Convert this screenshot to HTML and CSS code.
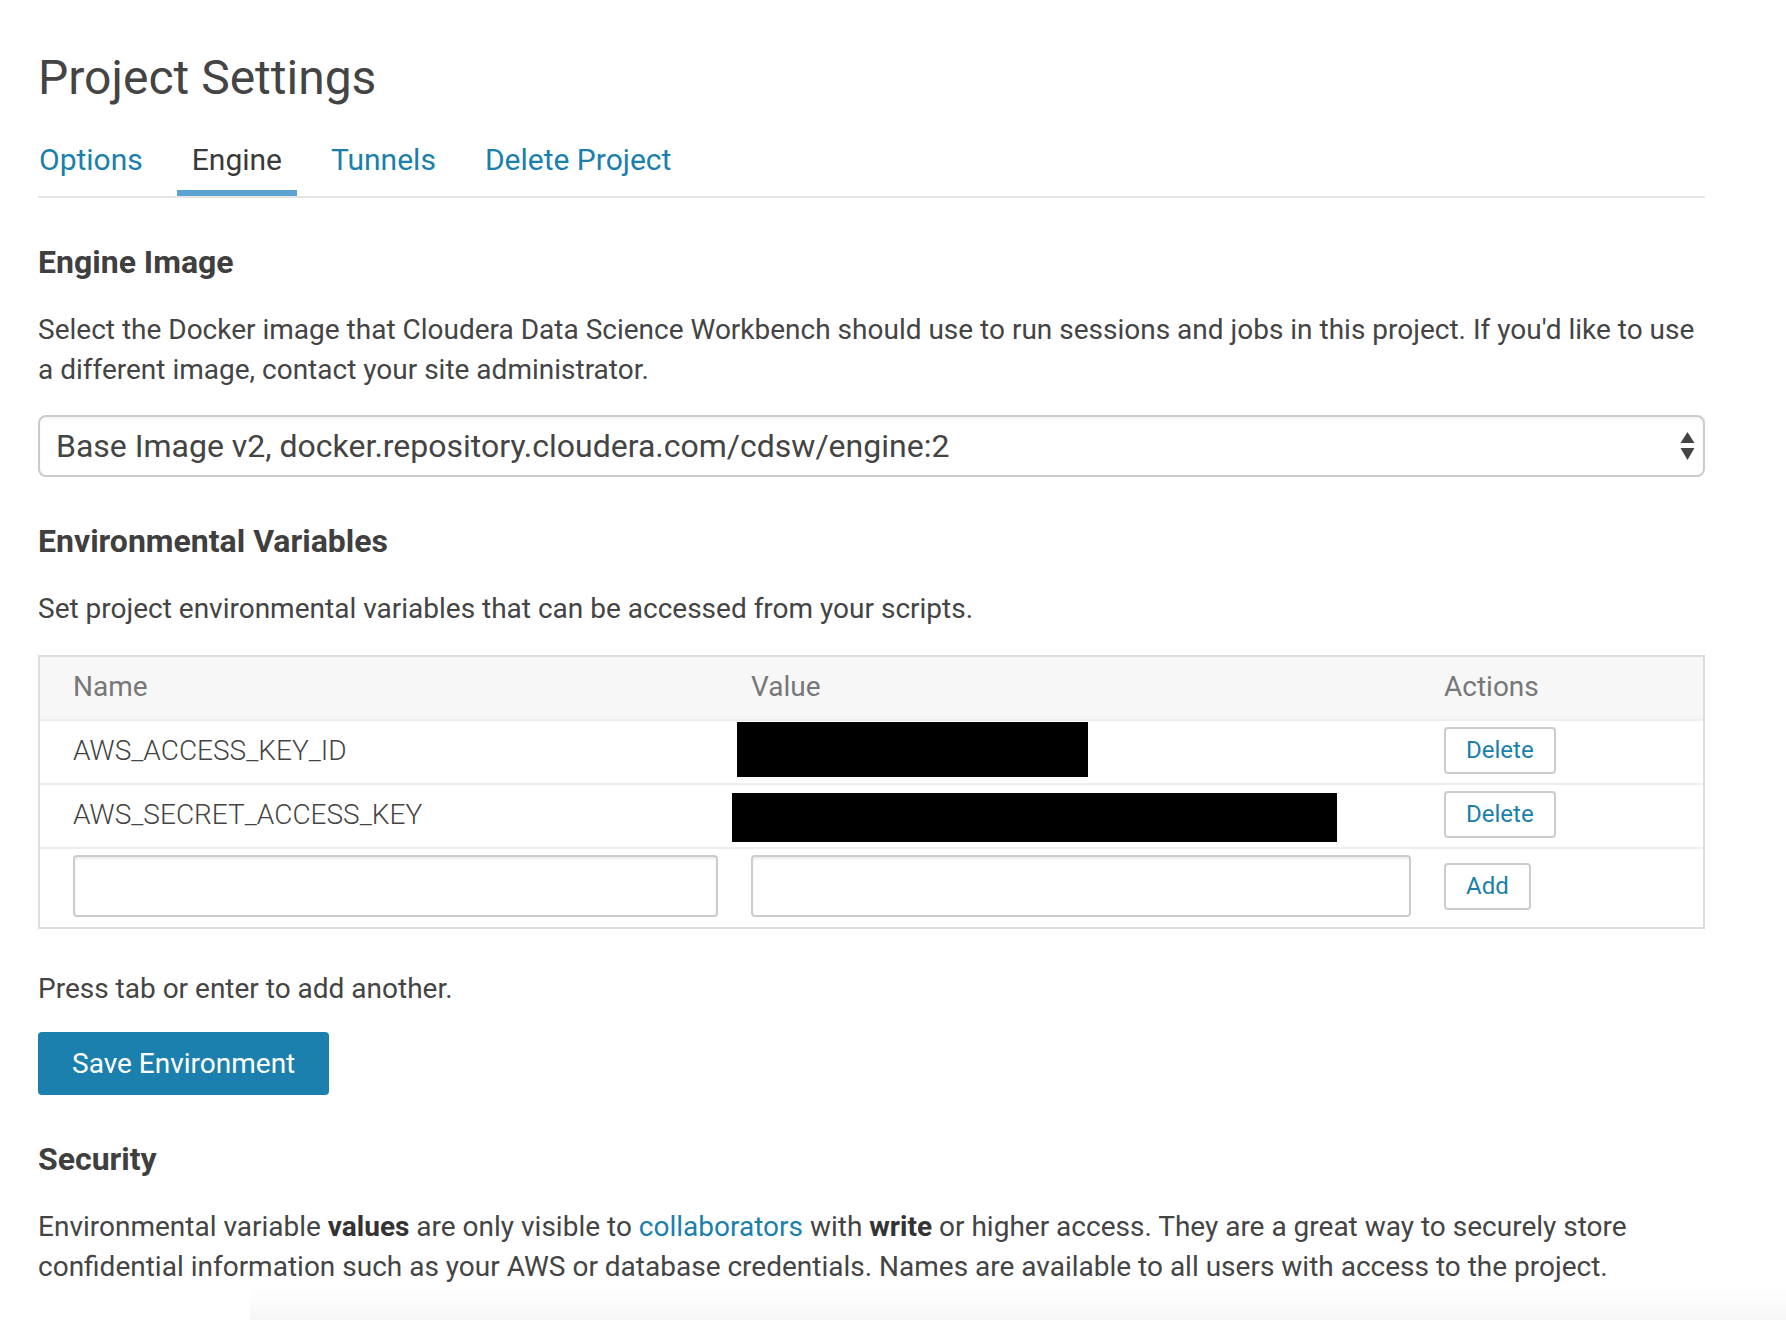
FILE: index.html
```html
<!DOCTYPE html>
<html lang="en">
<head>
<meta charset="utf-8">
<title>Project Settings</title>
<link rel="stylesheet" href="styles.css">
</head>
<body>
<main class="page">
  <h1 class="title">Project Settings</h1>
  <nav class="tabs">
    <ul class="tab-list">
      <li class="tab"><a class="tab-link" href="#">Options</a></li>
      <li class="tab tab-active"><a class="tab-link" href="#">Engine</a></li>
      <li class="tab"><a class="tab-link" href="#">Tunnels</a></li>
      <li class="tab"><a class="tab-link" href="#">Delete Project</a></li>
    </ul>
  </nav>

  <h2 class="section-title">Engine Image</h2>
  <p class="text">Select the Docker image that Cloudera Data Science Workbench should use to run sessions and jobs in this project. If you'd like to use a different image, contact your site administrator.</p>
  <div class="select">
    <span class="select-value">Base Image v2, docker.repository.cloudera.com/cdsw/engine:2</span>
    <span class="select-arrows">
      <svg width="15" height="30" viewBox="0 0 15 30"><path d="M7.5 1 L14.5 12 L0.5 12 Z" fill="#444"/><path d="M0.5 17 L14.5 17 L7.5 29 Z" fill="#444"/></svg>
    </span>
  </div>

  <h2 class="section-title">Environmental Variables</h2>
  <p class="text">Set project environmental variables that can be accessed from your scripts.</p>

  <div class="env-table">
    <div class="env-row env-head">
      <div class="cell">Name</div>
      <div class="cell">Value</div>
      <div class="cell">Actions</div>
    </div>
    <div class="env-row">
      <div class="cell name">AWS_ACCESS_KEY_ID</div>
      <div class="cell value"></div>
      <div class="cell"><button class="btn-outline" type="button">Delete</button></div>
      <span class="redact redact-1"></span>
    </div>
    <div class="env-row">
      <div class="cell name">AWS_SECRET_ACCESS_KEY</div>
      <div class="cell value"></div>
      <div class="cell"><button class="btn-outline" type="button">Delete</button></div>
      <span class="redact redact-2"></span>
    </div>
    <div class="env-row env-new">
      <div class="cell"><input class="field" type="text"></div>
      <div class="cell"><input class="field" type="text"></div>
      <div class="cell"><button class="btn-outline" type="button">Add</button></div>
    </div>
  </div>

  <p class="text hint">Press tab or enter to add another.</p>
  <button class="btn-primary" type="button">Save Environment</button>

  <h2 class="section-title">Security</h2>
  <p class="text">Environmental variable <strong>values</strong> are only visible to <a class="link" href="#">collaborators</a> with <strong>write</strong> or higher access. They are a great way to securely store confidential information such as your AWS or database credentials. Names are available to all users with access to the project.</p>
</main>
<div class="bottom-fade"></div>
</body>
</html>
```

FILE: styles.css
```css
html, body {
  margin: 0;
  padding: 0;
  background: #ffffff;
}

body {
  font-family: Roboto, "Liberation Sans", Arial, sans-serif;
  font-size: 28px;
  line-height: 40px;
  color: #444444;
}

.page {
  width: 1667px;
  margin-left: 38px;
  padding-top: 50px;
  padding-bottom: 40px;
}

.title {
  margin: 0;
  font-size: 48px;
  line-height: 56px;
  font-weight: 400;
  color: #444444;
}

.tabs {
  margin-top: 36px;
  border-bottom: 2px solid #e6e6e6;
}

.tab-list {
  display: flex;
  gap: 19px;
  list-style: none;
  margin: 0 0 0 -14px;
  padding: 0;
}

.tab {
  padding: 0 15px 13px;
  border-bottom: 6px solid transparent;
  font-size: 30px;
  line-height: 35px;
}

.tab-link {
  color: #1a7fac;
  text-decoration: none;
}

.tab-active {
  border-bottom-color: #5aa3d2;
}

.tab-active .tab-link {
  color: #3a3a3a;
}

.section-title {
  margin: 44px 0 0;
  font-size: 32px;
  line-height: 40px;
  font-weight: 700;
  color: #3f3f3f;
}

.text {
  margin: 28px 0 0;
}

.select {
  margin-top: 25px;
  height: 62px;
  box-sizing: border-box;
  border: 2px solid #cccccc;
  border-radius: 8px;
  display: flex;
  align-items: center;
  justify-content: space-between;
  padding: 0 8px 0 16px;
  box-shadow: inset 0 2px 3px rgba(0, 0, 0, 0.05);
}

.select-value {
  font-size: 32px;
  line-height: 40px;
  color: #444444;
}

.select-arrows {
  display: flex;
  align-items: center;
}

.select-arrows svg {
  display: block;
}

.env-table {
  margin-top: 26px;
  border: 2px solid #dddddd;
}

.env-row {
  position: relative;
  display: grid;
  grid-template-columns: 645px 660px 1fr;
  column-gap: 33px;
  padding: 0 0 0 33px;
  min-height: 62px;
  align-items: center;
  border-top: 2px solid #eeeeee;
}

.env-head {
  border-top: none;
  background: #f7f7f7;
  color: #777777;
}

.env-head .cell {
  padding: 0 0 3px;
}

.cell {
  min-width: 0;
}

.name {
  font-weight: 300;
  color: #444444;
  padding-bottom: 3px;
}

.env-new {
  padding-top: 6px;
  padding-bottom: 10px;
}

.field {
  display: block;
  width: 100%;
  height: 62px;
  box-sizing: border-box;
  border: 2px solid #cccccc;
  border-radius: 4px;
  box-shadow: inset 0 2px 2px rgba(0, 0, 0, 0.08);
  background: #ffffff;
  font-family: inherit;
  font-size: 28px;
  padding: 0 12px;
  margin: 0;
}

.btn-outline {
  display: block;
  height: 47px;
  padding: 0 20px;
  border: 2px solid #cccccc;
  border-radius: 4px;
  background: #ffffff;
  color: #1a7fac;
  font-family: inherit;
  font-size: 24px;
  line-height: 43px;
  margin: 0 0 3px;
  cursor: pointer;
}

.env-new .btn-outline {
  margin: 0;
}

.redact {
  position: absolute;
  background: #000000;
}

.redact-1 {
  left: 697px;
  top: 1px;
  width: 351px;
  height: 55px;
}

.redact-2 {
  left: 692px;
  top: 8px;
  width: 605px;
  height: 49px;
}

.hint {
  margin-top: 40px;
}

.btn-primary {
  display: block;
  margin-top: 23px;
  height: 63px;
  padding: 0 34px;
  border: none;
  border-radius: 4px;
  background: #1b80ad;
  color: #ffffff;
  font-family: inherit;
  font-size: 28px;
  line-height: 40px;
  cursor: pointer;
}

.link {
  color: #1a7fac;
  text-decoration: none;
}

strong {
  font-weight: 700;
  color: #333333;
}

.bottom-fade {
  position: fixed;
  left: 250px;
  right: 0;
  bottom: 0;
  height: 34px;
  background: linear-gradient(to bottom, rgba(0, 0, 0, 0), rgba(0, 0, 0, 0.03));
  pointer-events: none;
}
```
